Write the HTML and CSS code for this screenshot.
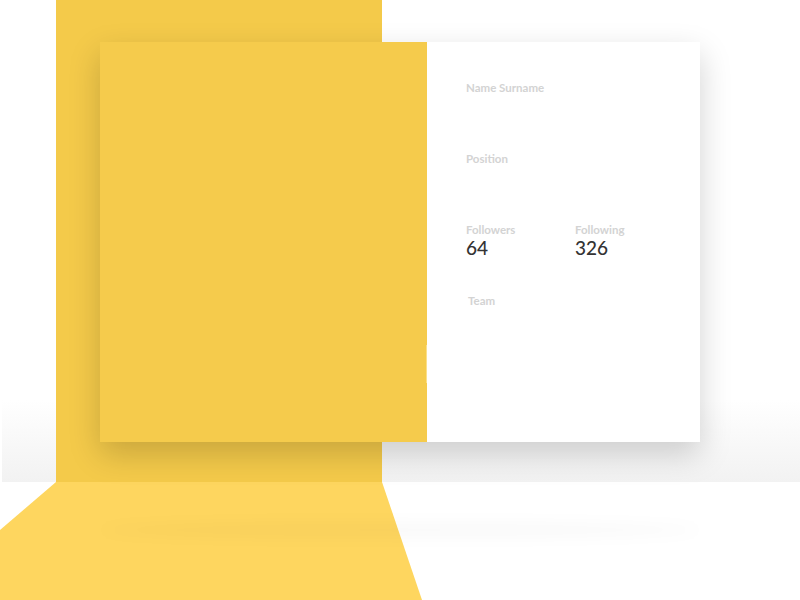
FILE: index.html
```html
<!DOCTYPE html>
<html lang="en">
<head>
<meta charset="UTF-8">
<meta name="viewport" content="width=device-width, initial-scale=1.0">
<title>Profile Card</title>
<link rel="stylesheet" href="styles.css">
</head>
<body>
<div class="scene">
    <div class="wall"></div>
    <div class="pillar"></div>
    <div class="floor"></div>
    <div class="floor-shadow"></div>

    <div class="card">
        <div class="card-photo"></div>
        <div class="card-info">
            <div class="label name">Name Surname</div>
            <div class="label position">Position</div>
            <div class="stats">
                <div class="stat">
                    <div class="label">Followers</div>
                    <div class="count">64</div>
                </div>
                <div class="stat">
                    <div class="label">Following</div>
                    <div class="count">326</div>
                </div>
            </div>
            <div class="label team">Team</div>
        </div>
    </div>
</div>
</body>
</html>
```

FILE: styles.css
```css
body {
    margin: 0;
    padding: 0;
    background-color: #fff;
    font-family: Lato, "Open Sans", sans-serif;
    overflow: hidden;
}

.scene {
    position: relative;
    width: 800px;
    height: 600px;
    overflow: hidden;
}

.wall {
    position: absolute;
    left: 2px;
    top: 0;
    width: 798px;
    height: 482px;
    background: linear-gradient(to bottom, #fff 0, #fff 400px, #f2f2f2 482px);
}

.pillar {
    position: absolute;
    left: 56px;
    top: 0;
    width: 326px;
    height: 482px;
    background-color: #f4ca4a;
}

.floor {
    position: absolute;
    left: 0;
    top: 482px;
    width: 422px;
    height: 118px;
    background-color: #fed65f;
    clip-path: polygon(56px 0, 382px 0, 422px 118px, 0 118px, 0 48px);
}

.floor-shadow {
    position: absolute;
    left: 100px;
    top: 522px;
    width: 600px;
    height: 16px;
    border-radius: 50%;
    background-color: rgba(0, 0, 0, 0.025);
    filter: blur(7px);
}

.card {
    position: absolute;
    left: 100px;
    top: 42px;
    width: 600px;
    height: 400px;
    display: flex;
    box-shadow: 0 12px 30px rgba(0, 0, 0, 0.18);
}

.card-photo {
    position: relative;
    width: 327px;
    background-color: #f5cb4c;
}

/* faint highlight along the photo edge */
.card-photo::after {
    content: "";
    position: absolute;
    right: 0;
    top: 303px;
    width: 1px;
    height: 38px;
    background-color: #fbe08a;
}

.card-info {
    flex: 1;
    background-color: #fff;
    padding: 39px 0 0 39px;
}

.label {
    font-size: 11.5px;
    font-weight: 700;
    color: #d3d3d3;
    line-height: 14px;
}

.position {
    margin-top: 57px;
}

.stats {
    display: flex;
    margin-top: 57px;
}

.stat {
    width: 109px;
}

.count {
    font-size: 19px;
    font-weight: 500;
    color: #333;
    line-height: 22px;
}

.team {
    margin-top: 35px;
    margin-left: 2px;
}
```
